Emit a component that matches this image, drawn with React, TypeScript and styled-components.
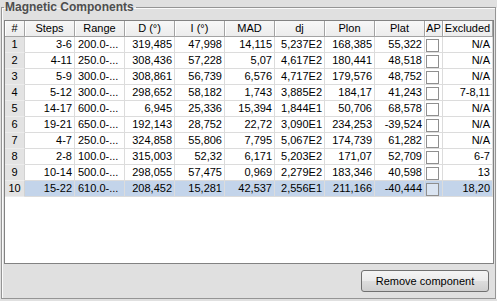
import styled, { createGlobalStyle } from "styled-components";

const GlobalStyle = createGlobalStyle`
    html, body {
        margin: 0;
        padding: 0;
        background: #e0e0e0;
    }
    body {
        font-family: "Liberation Sans", Arial, sans-serif;
        font-size: 11px;
        color: #000;
    }
`;

interface Column {
    label: string;
    width?: number;
    align: "left" | "right" | "center";
}

const columns: Column[] = [
    { label: "#", width: 20, align: "center" },
    { label: "Steps", align: "right" },
    { label: "Range", align: "left" },
    { label: "D (°)", align: "right" },
    { label: "I (°)", align: "right" },
    { label: "MAD", align: "right" },
    { label: "dj", align: "right" },
    { label: "Plon", align: "right" },
    { label: "Plat", align: "right" },
    { label: "AP", width: 18, align: "center" },
    { label: "Excluded", align: "right" },
];

// steps, range, D, I, MAD, dj, Plon, Plat, excluded
const rows: string[][] = [
    ["3-6", "200.0-...", "319,485", "47,998", "14,115", "5,237E2", "168,385", "55,322", "N/A"],
    ["4-11", "250.0-...", "308,436", "57,228", "5,07", "4,617E2", "180,441", "48,518", "N/A"],
    ["5-9", "300.0-...", "308,861", "56,739", "6,576", "4,717E2", "179,576", "48,752", "N/A"],
    ["5-12", "300.0-...", "298,652", "58,182", "1,743", "3,885E2", "184,17", "41,243", "7-8,11"],
    ["14-17", "600.0-...", "6,945", "25,336", "15,394", "1,844E1", "50,706", "68,578", "N/A"],
    ["19-21", "650.0-...", "192,143", "28,752", "22,72", "3,090E1", "234,253", "-39,524", "N/A"],
    ["4-7", "250.0-...", "324,858", "55,806", "7,795", "5,067E2", "174,739", "61,282", "N/A"],
    ["2-8", "100.0-...", "315,003", "52,32", "6,171", "5,203E2", "171,07", "52,709", "6-7"],
    ["10-14", "500.0-...", "298,055", "57,475", "0,969", "2,279E2", "183,346", "40,598", "13"],
    ["15-22", "610.0-...", "208,452", "15,281", "42,537", "2,556E1", "211,166", "-40,444", "18,20"],
];

const selectedRow = 9;

const Panel = styled.fieldset`
    box-sizing: border-box;
    width: 495px;
    margin: 0 0 0 1px;
    padding: 6px 1px 6px 2px;
    border: 1px solid #959595;
    box-shadow: inset 1px 1px 0 #fbfbfb, 1px 1px 0 #fbfbfb;
    display: flex;
    flex-direction: column;
    gap: 6px;
`;

const Title = styled.legend`
    margin-left: 0;
    padding: 0 2px 0 1px;
    font-family: "Liberation Sans", Arial, sans-serif;
    font-weight: bold;
    font-size: 12px;
    line-height: 14px;
    color: #4e4e4e;
`;

const ScrollPane = styled.div`
    box-sizing: border-box;
    height: 244px;
    border: 1px solid #828282;
    background: #fff;
    overflow: hidden;
`;

const Grid = styled.table`
    width: 100%;
    table-layout: fixed;
    border-collapse: separate;
    border-spacing: 0;
`;

const HeadCell = styled.th`
    height: 15px;
    padding: 0;
    background: linear-gradient(#f7f7f7, #ececec);
    border-right: 1px solid #a3a3a3;
    border-bottom: 1px solid #a3a3a3;
    box-shadow: inset 1px 0 0 #fff;
    font-weight: normal;
    line-height: 15px;
    text-align: center;
    white-space: nowrap;
    overflow: hidden;
`;

const Cell = styled.td<{ $align: string; $selected: boolean }>`
    height: 15px;
    padding: 0 2px 0 3px;
    background: ${(p) => (p.$selected ? "#c3d4ea" : "#fff")};
    border-right: 1px solid #dcdcdc;
    border-bottom: 1px solid #dcdcdc;
    line-height: 15px;
    text-align: ${(p) => p.$align};
    white-space: nowrap;
    overflow: hidden;
`;

const IndexCell = styled.td`
    height: 15px;
    padding: 0;
    background: #e3e3e3;
    border-right: 1px solid #d2d2d2;
    border-bottom: 1px solid #ececec;
    line-height: 15px;
    text-align: center;
`;

const CheckBox = styled.span<{ $selected: boolean }>`
    display: block;
    width: 11px;
    height: 11px;
    margin: 1px 0 0 1px;
    border: 1px solid #8f8f8f;
    background: ${(p) => (p.$selected ? "#dbe5f2" : "#fff")};
`;

const Footer = styled.div`
    display: flex;
    justify-content: flex-end;
    padding-right: 5px;
`;

const Button = styled.button`
    box-sizing: border-box;
    width: 128px;
    height: 22px;
    padding: 0;
    border: 1px solid #707070;
    border-radius: 3px;
    background: linear-gradient(#f4f4f4 0%, #ebebeb 50%, #dddddd 51%, #cfcfcf 100%);
    font-family: "Liberation Sans", Arial, sans-serif;
    font-size: 11px;
    color: #000;
`;

const App = () => {
    return (
        <>
            <GlobalStyle />
            <Panel>
                <Title>Magnetic Components</Title>
                <ScrollPane>
                    <Grid>
                        <colgroup>
                            {columns.map((c) => (
                                <col key={c.label} style={c.width ? { width: c.width } : undefined} />
                            ))}
                        </colgroup>
                        <thead>
                            <tr>
                                {columns.map((c) => (
                                    <HeadCell key={c.label}>{c.label}</HeadCell>
                                ))}
                            </tr>
                        </thead>
                        <tbody>
                            {rows.map((r, i) => {
                                const sel = i === selectedRow;
                                return (
                                    <tr key={i}>
                                        <IndexCell>{i + 1}</IndexCell>
                                        {r.slice(0, 8).map((v, j) => (
                                            <Cell key={j} $align={columns[j + 1].align} $selected={sel}>
                                                {v}
                                            </Cell>
                                        ))}
                                        <Cell $align="left" $selected={sel} style={{ padding: 0 }}>
                                            <CheckBox $selected={sel} />
                                        </Cell>
                                        <Cell $align="right" $selected={sel}>
                                            {r[8]}
                                        </Cell>
                                    </tr>
                                );
                            })}
                        </tbody>
                    </Grid>
                </ScrollPane>
                <Footer>
                    <Button type="button">Remove component</Button>
                </Footer>
            </Panel>
        </>
    );
};

export default App;
